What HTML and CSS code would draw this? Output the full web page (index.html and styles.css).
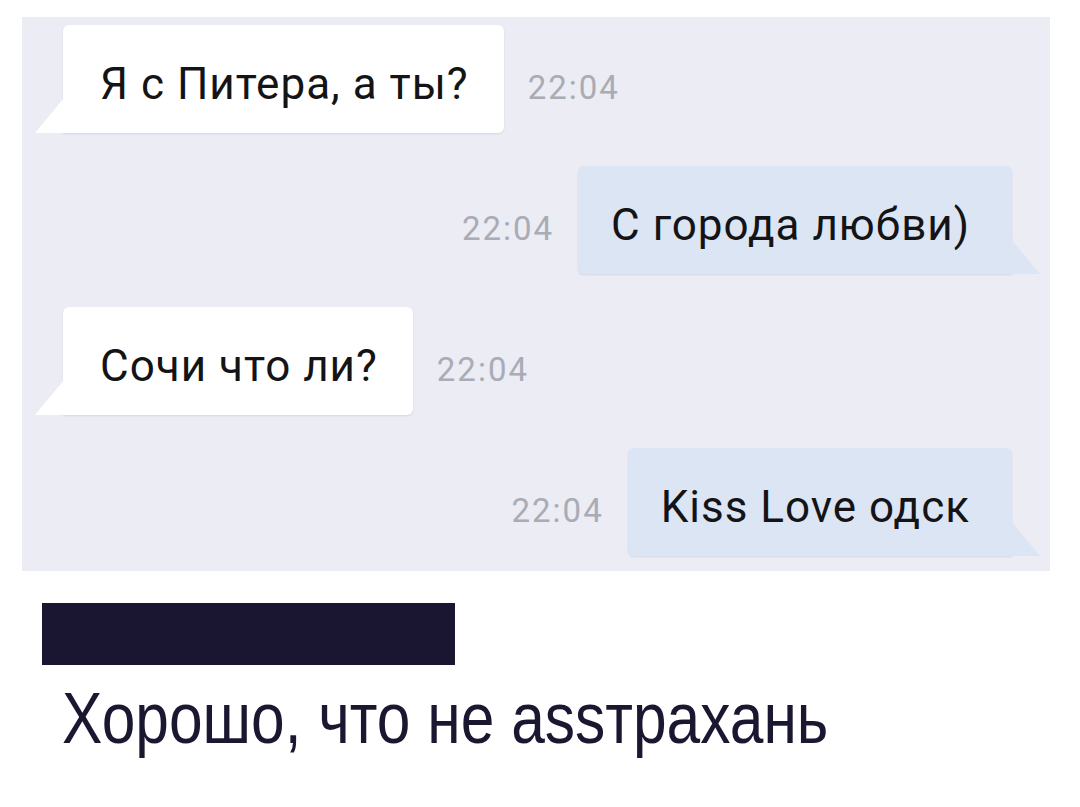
FILE: index.html
```html
<!DOCTYPE html>
<html lang="ru">
<head>
<meta charset="utf-8">
<title>Чат</title>
<link rel="stylesheet" href="styles.css">
</head>
<body>
<div class="panel">
  <div class="row in">
    <div class="bubble white">Я с Питера, а ты?</div>
    <span class="time">22:04</span>
  </div>
  <div class="row out">
    <span class="time">22:04</span>
    <div class="bubble blue">С города любви)</div>
  </div>
  <div class="row in">
    <div class="bubble white">Сочи что ли?</div>
    <span class="time">22:04</span>
  </div>
  <div class="row out">
    <span class="time">22:04</span>
    <div class="bubble blue">Kiss Love одск</div>
  </div>
</div>
<div class="redact"></div>
<p class="caption"><span class="caption-text">Хорошо, что не assтрахань</span></p>
</body>
</html>
```

FILE: styles.css
```css
html, body {
  margin: 0;
  padding: 0;
  background: #ffffff;
}

body {
  width: 1080px;
  height: 807px;
  overflow: hidden;
  font-family: Roboto, "Noto Sans", sans-serif;
}

.panel {
  margin: 17px 30px 0 22px;
  height: 554px;
  box-sizing: border-box;
  background: #ebecf4;
  padding: 8px 38px 15px 41px;
  display: flex;
  flex-direction: column;
  gap: 33px;
}

.row {
  display: flex;
  align-items: baseline;
  gap: 24px;
}

.row.out {
  justify-content: flex-end;
}

.bubble {
  position: relative;
  height: 108px;
  box-sizing: border-box;
  padding: 34px 35px 24px 37px;
  font-size: 44px;
  line-height: 50px;
  letter-spacing: 1px;
  color: #141416;
  border-radius: 6px;
  box-shadow: 0 1px 2px rgba(60, 60, 90, 0.12);
  white-space: nowrap;
}

.bubble.white {
  background: #ffffff;
  border-bottom-left-radius: 0;
}

.bubble.blue {
  background: #dce5f4;
  border-bottom-right-radius: 0;
  padding: 34px 42px 24px 33px;
}

.bubble.white::before {
  content: "";
  position: absolute;
  left: -28px;
  bottom: 0;
  width: 29px;
  height: 35px;
  background: #ffffff;
  clip-path: polygon(100% 0, 100% 100%, 0 100%);
}

.bubble.blue::after {
  content: "";
  position: absolute;
  right: -28px;
  bottom: 0;
  width: 29px;
  height: 35px;
  background: #dce5f4;
  clip-path: polygon(0 0, 100% 100%, 0 100%);
}

.time {
  font-size: 33px;
  color: #a9abb5;
  letter-spacing: 2px;
}

.redact {
  margin: 32px 0 0 42px;
  width: 413px;
  height: 62px;
  background: #1a1530;
}

.caption {
  margin: 8px 0 0 62px;
  font-family: "Liberation Sans", Arial, sans-serif;
  font-size: 72px;
  line-height: 90px;
  color: #1a1830;
  white-space: nowrap;
}

.caption-text {
  display: inline-block;
  transform: scaleX(0.84);
  transform-origin: left center;
}
```
